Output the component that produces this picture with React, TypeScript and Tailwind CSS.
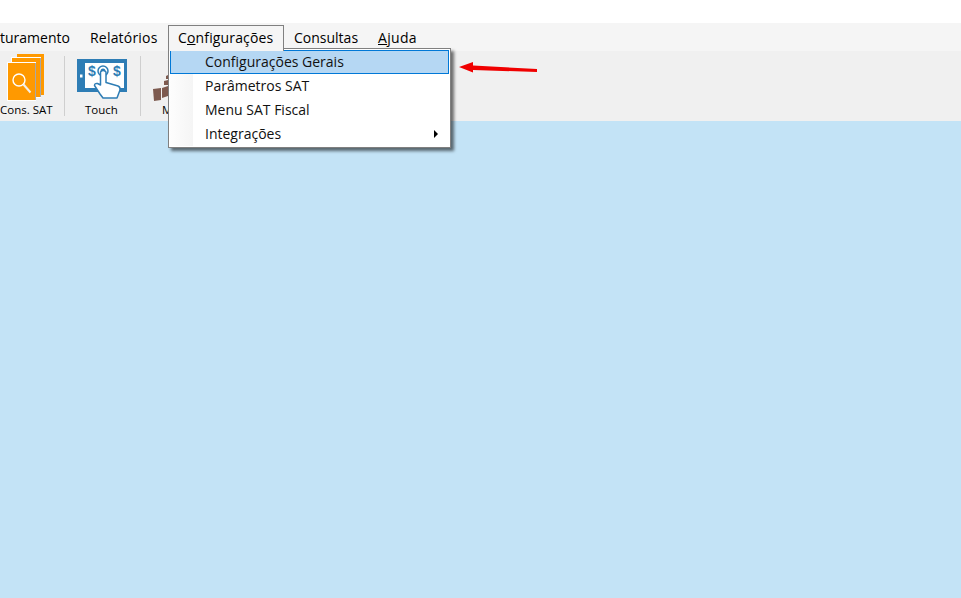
const font = { fontFamily: '"Open Sans", "Noto Sans", sans-serif' }

function ConsSatIcon() {
  return (
    <svg width="46" height="47" viewBox="0 0 46 47" className="block">
      <rect x="17" y="0" width="27" height="41" fill="#ff9900" />
      <rect x="11" y="3" width="30" height="41" fill="#fff" />
      <rect x="40" y="4" width="1" height="39" fill="#a8a8a8" />
      <rect x="12" y="4" width="28" height="39" fill="#ff9900" />
      <rect x="7" y="8" width="29" height="39" fill="#fff" />
      <rect x="35" y="9" width="1" height="37" fill="#a8a8a8" />
      <rect x="8" y="9" width="27" height="37" fill="#ff9900" />
      <circle cx="19" cy="26" r="6" fill="none" stroke="#fff" strokeWidth="1.4" />
      <path d="M23.5 30.5 L30.5 38.5" stroke="#f4f0e8" strokeWidth="2" />
    </svg>
  )
}

function TouchIcon() {
  return (
    <svg width="50" height="40" viewBox="0 0 50 40" className="block">
      <rect x="0" y="0" width="50" height="33" fill="#2e7db5" />
      <rect x="8" y="4" width="39" height="25" fill="#fff" />
      <rect x="3" y="15.5" width="2.5" height="3" fill="#fff" />
      <text x="11" y="17" fontSize="14" fontWeight="700" fill="#2e7db5" style={{ fontFamily: '"Liberation Sans", sans-serif' }}>$</text>
      <text x="36" y="17" fontSize="14" fontWeight="700" fill="#2e7db5" style={{ fontFamily: '"Liberation Sans", sans-serif' }}>$</text>
      <circle cx="26" cy="12" r="5" fill="none" stroke="#2e7db5" strokeWidth="1.5" />
      <circle cx="26" cy="12" r="2.5" fill="#2e7db5" />
      <path
        d="M23.5 13 L23.5 26 L20.5 24.5 Q17.5 24 17.5 26.5 L23 35 L26 39 L40 39 L43 31 Q43.5 28 41 27 L29 23.5 L29 13 Q26 10 23.5 13 Z"
        fill="#fff"
        stroke="#2e7db5"
        strokeWidth="1.5"
        strokeLinejoin="round"
      />
    </svg>
  )
}

function BrownIcon() {
  return (
    <svg width="15" height="26" viewBox="0 0 15 26" className="block">
      <path d="M0 14 L8 13 L8 25 L1 26 Z" fill="#7d5a4f" />
      <path d="M9 13 L15 11 L15 21 L9 23 Z" fill="#7d5a4f" />
      <path d="M11 6 L15 5 L15 10 L11 10 Z" fill="#7d5a4f" />
      <path d="M13 1 L15 0 L15 4 L13 4 Z" fill="#7d5a4f" />
    </svg>
  )
}

function ToolButton({ label, icon, className, labelClass }: { label: string; icon: React.ReactNode; className: string; labelClass: string }) {
  return (
    <div className={`${className} flex flex-col items-start shrink-0`}>
      <div className="h-[52px]">{icon}</div>
      <span className={`${labelClass} text-[11.5px] leading-[14px] text-black whitespace-nowrap`}>{label}</span>
    </div>
  )
}

function Separator() {
  return <div className="w-px h-[60px] bg-[#cfcfcf] shrink-0 mt-[5px]" />
}

function DropdownItem({ label, active, arrow }: { label: string; active?: boolean; arrow?: boolean }) {
  return (
    <div
      className={`h-6 flex items-center pl-[34px] pr-[10px] text-sm justify-between ${
        active ? 'bg-[#b5d7f3] border border-[#0078d7]' : 'border border-transparent'
      }`}
    >
      <span className="whitespace-nowrap text-[#111]">{label}</span>
      {arrow && <span className="w-0 h-0 border-y-[4px] border-y-transparent border-l-[4px] border-l-black" />}
    </div>
  )
}

export default function App() {
  return (
    <div className="relative h-[598px] w-[961px] overflow-hidden bg-[#c3e3f6]" style={font}>
      <div className="h-[23px] bg-white" />

      <div className="h-[28px] bg-[#f5f5f5] flex items-center text-sm text-black whitespace-nowrap">
        <span className="w-[68px] shrink-0 pt-[1px] text-right">turamento</span>
        <span className="ml-[22px] w-[78px] shrink-0 pt-[1px] tracking-[0.2px]">Relatórios</span>
        <div className="relative z-20 self-end w-[116px] h-[26px] shrink-0 border border-b-0 border-[#808080] bg-[#f5f5f5] pl-[9px] leading-[24px] tracking-[0.15px]">
          C<span className="underline">o</span>nfigurações
        </div>
        <span className="ml-[10px] w-[84px] shrink-0 pt-[1px]">Consultas</span>
        <span className="pt-[1px] tracking-[0.3px]">
          <span className="underline">A</span>juda
        </span>
      </div>

      <div className="h-[70px] bg-[#f0f0f0] flex items-start">
        <ToolButton label="Cons. SAT" className="w-[64px]" labelClass="" icon={<div className="pt-[3px]"><ConsSatIcon /></div>} />
        <Separator />
        <ToolButton label="Touch" className="w-[75px] pl-[12px]" labelClass="ml-[8px]" icon={<div className="pt-[8px]"><TouchIcon /></div>} />
        <Separator />
        <ToolButton label="M" className="w-[52px] pl-[12px]" labelClass="ml-[9px]" icon={<div className="pt-[24px]"><BrownIcon /></div>} />
      </div>

      <div className="absolute left-[168px] top-[48px] w-[283px] h-[100px] border border-[#808080] bg-white z-10 p-[1px] shadow-[3px_3px_3px_rgba(0,0,0,0.55)]">
        <div className="absolute left-[1px] top-[25px] bottom-[1px] w-[23px] bg-gradient-to-r from-[#fdfdfd] to-[#f5f5f5]" />
        <div className="relative flex flex-col">
          <DropdownItem label="Configurações Gerais" active />
          <DropdownItem label="Parâmetros SAT" />
          <DropdownItem label="Menu SAT Fiscal" />
          <DropdownItem label="Integrações" arrow />
        </div>
      </div>

      <svg className="absolute left-[458px] top-[61px]" width="82" height="14" viewBox="0 0 82 14">
        <path d="M1 6 L15 1 L15 4.5 L79 8 L79 11 L15 9 L15 11.5 Z" fill="#f00000" />
      </svg>
    </div>
  )
}
